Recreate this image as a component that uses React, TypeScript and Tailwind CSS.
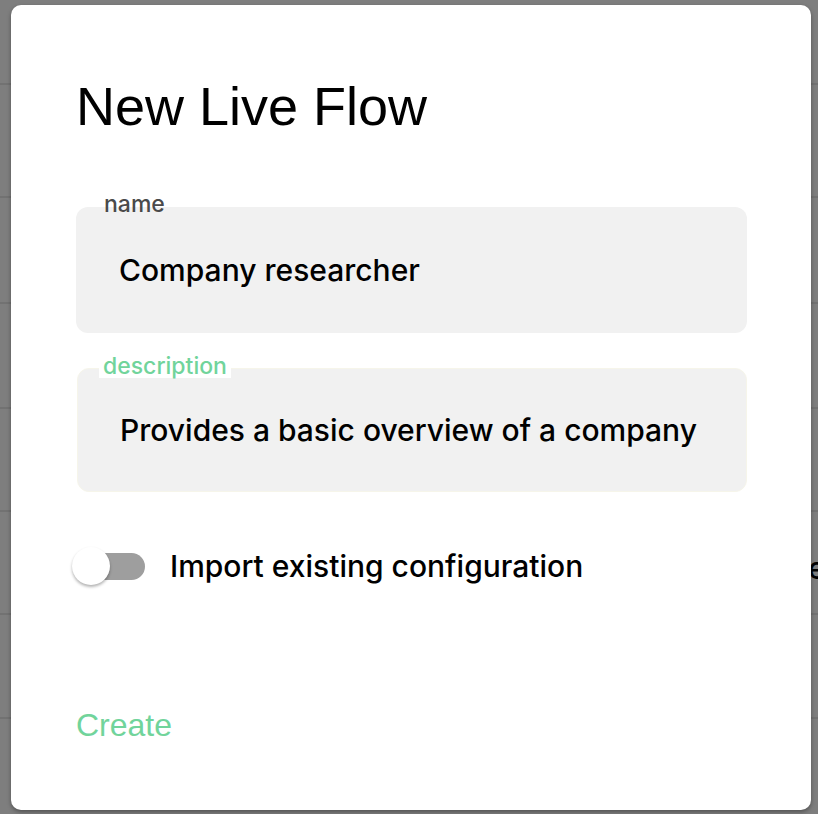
import React from "react";

const rows = [83, 196, 302, 407, 510, 613, 717];

export default function App() {
  return (
    <div className="relative w-[818px] h-[814px] overflow-hidden bg-[#7e7e7e]">
      {/* list behind the dialog */}
      <div className="absolute inset-0">
        {rows.map((y) => (
          <div key={y} className="absolute left-0 right-0 h-[2px] bg-[#727272]" style={{ top: y }} />
        ))}
        <span
          className="absolute left-[808px] top-[546px] text-[30px] font-medium text-black"
          style={{ fontFamily: "Inter, sans-serif" }}
        >
          e
        </span>
      </div>

      {/* dialog */}
      <div
        className="absolute left-[11px] top-[5px] w-[800px] h-[805px] bg-white rounded-[10px] shadow-[0_2px_4px_rgba(0,0,0,0.35)] pl-[65px] pr-[64px] pt-[69px] flex flex-col"
        style={{ fontFamily: "Inter, sans-serif" }}
      >
        <h1
          className="text-[54px] leading-[64px] text-black"
          style={{ fontFamily: '"Liberation Sans", Arial, sans-serif' }}
        >
          New Live Flow
        </h1>

        {/* name field */}
        <div className="relative mt-[69px] h-[126px] rounded-[12px] bg-[#f1f1f1] flex items-center pl-[43px]">
          <span className="absolute left-[28px] top-[-14px] text-[23px] leading-[23px] font-medium text-[#4a4a4a]">
            name
          </span>
          <span className="text-[30px] font-medium text-black">Company researcher</span>
        </div>

        {/* description field */}
        <div className="relative mt-[35px] ml-[1px] h-[124px] rounded-[12px] bg-[#f1f1f1] border border-[#f6f5ea] flex items-center pl-[42px]">
          <span className="absolute left-[21px] top-[-14px] px-[4px] bg-white text-[23px] leading-[23px] font-medium text-[#71d49b]">
            description
          </span>
          <span className="text-[30px] font-medium text-black">Provides a basic overview of a company</span>
        </div>

        {/* import toggle */}
        <div className="mt-[54px] flex items-center h-[40px]">
          <div className="relative w-[70px] h-[40px] flex items-center">
            <div className="absolute left-[14px] right-[1px] h-[27px] rounded-full bg-[#9e9e9e]" />
            <div className="absolute left-[-4px] w-[38px] h-[38px] rounded-full bg-white shadow-[0_2px_3px_rgba(0,0,0,0.3)]" />
          </div>
          <span className="ml-[24px] text-[30px] font-medium text-black">Import existing configuration</span>
        </div>

        <div className="mt-[121px]">
          <span
            className="text-[32px] leading-[36px] text-[#71d49b]"
            style={{ fontFamily: '"Liberation Sans", Arial, sans-serif' }}
          >
            Create
          </span>
        </div>
      </div>
    </div>
  );
}
